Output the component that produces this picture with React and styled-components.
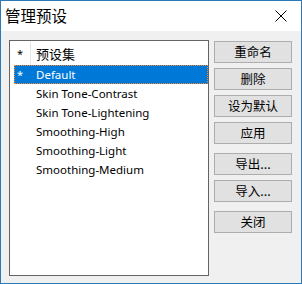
import React from "react";
import styled, { createGlobalStyle } from "styled-components";

const Global = createGlobalStyle`
  html, body {
    margin: 0;
    padding: 0;
    background: #fff;
  }
  * {
    box-sizing: border-box;
  }
`;

const Window = styled.div`
  width: 302px;
  height: 284px;
  border: 1px solid #2b79b9;
  background: #f0f0f0;
  display: flex;
  flex-direction: column;
  font-family: "Noto Sans", "Noto Sans CJK SC", sans-serif;
`;

const TitleBar = styled.div`
  height: 30px;
  background: #fff;
  display: flex;
  align-items: center;
  justify-content: space-between;
  padding: 0 10px 0 4px;
`;

const Title = styled.span`
  font-family: "Noto Sans CJK SC", sans-serif;
  font-size: 15.5px;
  color: #000;
  line-height: 1;
`;

const Close = styled.svg`
  width: 12px;
  height: 12px;
  margin-right: 4px;
`;

const Body = styled.div`
  flex: 1;
  display: flex;
  padding: 9px 0 0 8px;
  gap: 5px;
`;

const List = styled.div`
  width: 200px;
  height: 236px;
  background: #fff;
  border: 1px solid #646464;
  padding-top: 1px;
`;

const Row = styled.div`
  height: ${(p) => (p.$header ? "23px" : "19px")};
  display: flex;
  align-items: center;
  margin: 0 0 0 ${(p) => (p.$header ? "0" : "4px")};
  font-size: 12px;
  color: ${(p) => (p.$selected ? "#fff" : "#000")};
  background: ${(p) => (p.$selected ? "#0078d7" : "transparent")};
  outline: ${(p) => (p.$selected ? "1px dotted #ff8728" : "none")};
  outline-offset: -1px;
`;

const Star = styled.span`
  width: ${(p) => (p.$header ? "20px" : "16px")};
  padding-left: ${(p) => (p.$header ? "7px" : "3px")};
  font-size: 11px;
`;

const Sep = styled.span`
  width: 1px;
  align-self: stretch;
  background: #e5e5e5;
  margin-right: 5px;
`;

const Name = styled.span`
  padding-left: ${(p) => (p.$header ? "0" : "6px")};
  font-family: ${(p) =>
    p.$header ? '"Noto Sans CJK SC", sans-serif' : '"Noto Sans", sans-serif'};
  font-size: ${(p) => (p.$header ? "13px" : "11.5px")};
`;

const Buttons = styled.div`
  display: flex;
  flex-direction: column;
  padding-top: 1px;
  gap: 5px;
`;

const Button = styled.button`
  width: 78px;
  height: 22px;
  margin-top: ${(p) => (p.$spaced ? "4px" : "0")};
  border: 1px solid #adadad;
  background: #e1e1e1;
  font-family: "Noto Sans CJK SC", sans-serif;
  font-size: 12.5px;
  color: #000;
  padding: 0;
  line-height: 1;
`;

const presets = [
  "Skin Tone-Contrast",
  "Skin Tone-Lightening",
  "Smoothing-High",
  "Smoothing-Light",
  "Smoothing-Medium",
];

export default function App() {
  return (
    <>
      <Global />
      <Window>
        <TitleBar>
          <Title>管理预设</Title>
          <Close viewBox="0 0 12 12">
            <path d="M0.5 0.5 L11.5 11.5 M11.5 0.5 L0.5 11.5" stroke="#000" strokeWidth="1" />
          </Close>
        </TitleBar>
        <Body>
          <List>
            <Row $header>
              <Star $header>*</Star>
              <Sep />
              <Name $header>预设集</Name>
            </Row>
            <Row $selected>
              <Star>*</Star>
              <Name>Default</Name>
            </Row>
            {presets.map((p) => (
              <Row key={p}>
                <Star />
                <Name>{p}</Name>
              </Row>
            ))}
          </List>
          <Buttons>
            <Button>重命名</Button>
            <Button>删除</Button>
            <Button>设为默认</Button>
            <Button>应用</Button>
            <Button $spaced>导出...</Button>
            <Button>导入...</Button>
            <Button $spaced>关闭</Button>
          </Buttons>
        </Body>
      </Window>
    </>
  );
}
